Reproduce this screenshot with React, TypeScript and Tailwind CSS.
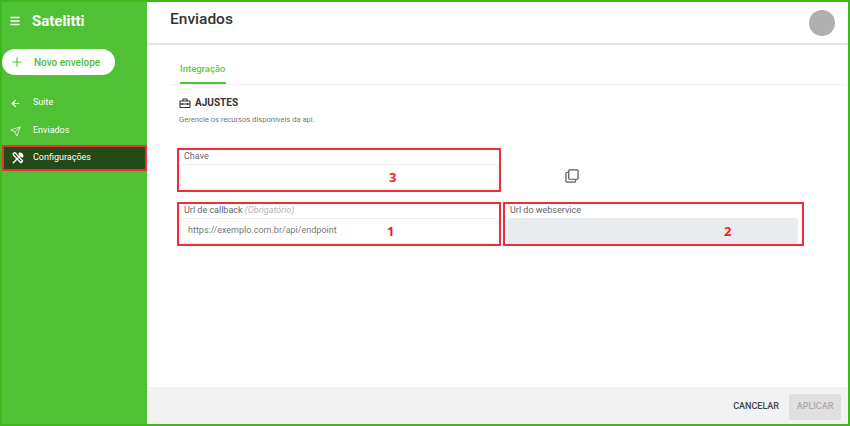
import React from "react";
import { Menu, Plus, ArrowLeft, Send } from "lucide-react";

const Wrench = () => (
  <svg width="14" height="14" viewBox="0 0 24 24" fill="none" stroke="#fff" strokeWidth="2.4" strokeLinecap="round" strokeLinejoin="round">
    <path d="M4 20 14 10" />
    <path d="M14 4a5 5 0 0 1 6 6l-3-1-2-2-1-3z" fill="#fff" />
    <path d="M4 4l3-1 13 14-3 3L4 7z" />
  </svg>
);

const Toolbox = () => (
  <svg width="12" height="12" viewBox="0 0 24 24" fill="none" stroke="#333" strokeWidth="2.2">
    <path d="M8 8V4h8v4" />
    <rect x="2" y="8" width="20" height="13" rx="1" />
    <path d="M2 14h20" />
    <path d="M7 12v4M17 12v4" />
  </svg>
);

const CopyIcon = () => (
  <svg width="14" height="14" viewBox="0 0 15 15" fill="none" stroke="#555" strokeWidth="1.3">
    <rect x="4" y="1" width="10" height="10" rx="1.2" />
    <path d="M4 3.5H2.2A1.2 1.2 0 0 0 1 4.7v8.1A1.2 1.2 0 0 0 2.2 14h8.1a1.2 1.2 0 0 0 1.2-1.2V11" />
  </svg>
);

const Field = ({
  label,
  hint,
  value,
  mark,
  disabled,
  className,
  markClass,
  inputClass,
}: {
  label: string;
  hint?: string;
  value?: string;
  mark: string;
  disabled?: boolean;
  className: string;
  markClass: string;
  inputClass: string;
}) => (
  <div className={`relative h-[44px] border-2 border-[#f02c3c] ${className}`}>
    <div className="h-[13px] pl-[5px] text-[9px] leading-[12px] text-[#666]">
      {label} {hint && <i className="text-[#b5b5b5]">{hint}</i>}
    </div>
    <div
      className={`mt-[1px] flex h-[26px] items-center rounded-[3px] border pl-[7px] text-[9px] text-[#777] ${inputClass} ${
        disabled ? "border-[#e9ecef] bg-[#e9ecef]" : "border-[#eeeeee] bg-white"
      }`}
    >
      {value}
    </div>
    <span className={`absolute top-[18px] font-['Open_Sans',sans-serif] text-[13px] font-bold leading-[18px] text-[#ee1c2e] ${markClass}`}>
      {mark}
    </span>
  </div>
);

export default function App() {
  return (
    <div className="flex h-[426px] w-[850px] overflow-hidden border-2 border-[#3cb81c] bg-white font-['Roboto',sans-serif]">
      <aside className="flex w-[145px] shrink-0 flex-col bg-[#50c135] text-white">
        <div className="flex h-[38px] items-center pl-[7px]">
          <Menu size={12} strokeWidth={3} />
          <span className="ml-[11px] text-[15px] font-bold">Satelitti</span>
        </div>
        <div className="mt-[9px] flex h-[26px] w-[113px] items-center rounded-full bg-white pl-[8px] text-[10px] font-medium text-[#50c135]">
          <Plus size={14} />
          <span className="ml-[10px]">Novo envelope</span>
        </div>
        <div className="mt-[14px] flex h-[28px] items-center pl-[8px] text-[9px]">
          <ArrowLeft size={11} strokeWidth={2.5} />
          <span className="ml-[12px]">Suite</span>
        </div>
        <div className="flex h-[28px] items-center pl-[8px] text-[9px]">
          <Send size={11} strokeWidth={1.5} />
          <span className="ml-[12px]">Enviados</span>
        </div>
        <div className="flex h-[26px] items-center border-2 border-[#f02c3c] bg-[#234a17] pl-[7px] text-[9px]">
          <Wrench />
          <span className="ml-[8px]">Configurações</span>
        </div>
      </aside>

      <main className="flex min-w-0 flex-1 flex-col">
        <header className="flex h-[43px] shrink-0 items-center justify-between border-b-2 border-[#e4e4e4] pl-[23px] pr-[13px]">
          <h1 className="mb-[6px] text-[15.5px] font-medium text-[#333]">Enviados</h1>
          <div className="h-[26px] w-[26px] rounded-full bg-[#b0b0b0]" />
        </header>

        <div className="flex-1 pl-[23px]">
          <div className="mt-[16px] border-b border-[#f0f0f0]">
            <div className="ml-[10px] w-[46px] border-b-2 border-[#50c135] pb-[5px] text-[9.5px] font-medium leading-[16px] text-[#63c84d]">
              Integração
            </div>
          </div>
          <div className="ml-[9px] mt-[10px] flex items-center gap-[4px] text-[10px] font-bold leading-[16px] text-[#333]">
            <Toolbox />
            AJUSTES
          </div>
          <p className="ml-[9px] mt-[2px] text-[7.6px] leading-[14px] text-[#777]">
            Gerencie os recursos disponíveis da api.
          </p>

          <div className="ml-[7px] mt-[21px] flex flex-col gap-[10px]">
            <div className="flex items-center">
              <Field
                label="Chave"
                mark="3"
                className="w-[324px]"
                markClass="left-[210px]"
                inputClass="mx-[1px]"
              />
              <div className="ml-[64px] mt-[12px]">
                <CopyIcon />
              </div>
            </div>
            <div className="flex gap-[2px]">
              <Field
                label="Url de callback"
                hint="(Obrigatório)"
                value="https://exemplo.com.br/api/endpoint"
                mark="1"
                className="w-[324px]"
                markClass="left-[208px]"
                inputClass="mx-[1px]"
              />
              <Field
                label="Url do webservice"
                mark="2"
                disabled
                className="w-[301px]"
                markClass="left-[219px]"
                inputClass="ml-[2px] mr-[4px]"
              />
            </div>
          </div>
        </div>

        <footer className="flex h-[37px] shrink-0 items-center justify-end bg-[#f2f2f2] pr-[7px] pt-[2px]">
          <span className="mr-[10px] text-[9px] font-medium text-[#444]">CANCELAR</span>
          <div className="flex h-[26px] w-[52px] items-center justify-center rounded-[2px] bg-[#e0e0e0] text-[9px] font-medium text-[#aaa]">
            APLICAR
          </div>
        </footer>
      </main>
    </div>
  );
}
